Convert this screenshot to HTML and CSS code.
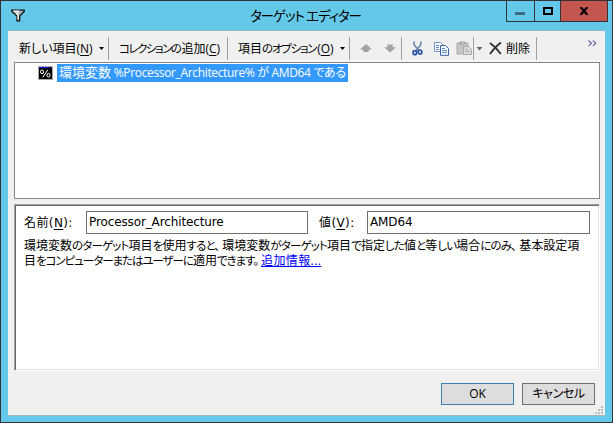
FILE: index.html
```html
<!DOCTYPE html>
<html lang="ja">
<head>
<meta charset="utf-8">
<title>ターゲット エディター</title>
<link rel="stylesheet" href="styles.css">
</head>
<body>
<div class="window">
  <header class="titlebar">
    <svg class="app-icon" width="14" height="13" viewBox="0 0 14 13"><path d="M.8 1.2h12.4v1.2L8.7 7v4.8H6V7L.8 2.4z" fill="#a9b9b9" stroke="#111" stroke-width="1.3"/><path d="M2.5 2.2h5L5.7 4.6 7 6.5v4" stroke="#fff" stroke-width="1.2" fill="none"/></svg>
    <h1 class="title"><span class="t-title">ターゲット エディター</span></h1>
    <div class="controls">
      <span class="control"><svg width="10" height="3"><path fill="#3b6e80" d="M0 0h10v3H0z"/></svg></span>
      <span class="control max"><svg width="10" height="8"><path fill="none" stroke="#000" stroke-width="2" d="M1 1h8v6H1z"/></svg></span>
      <span class="control close"><svg width="10" height="8" viewBox="0 0 10 8"><path d="M1.6 0l6.8 8M8.4 0L1.6 8" stroke="#000" stroke-width="2.2"/></svg></span>
    </div>
  </header>
  <main class="client">
    <nav class="toolbar">
      <span class="tool new"><span class="t-new">新しい項目(<u>N</u>)</span><i class="caret"></i></span>
      <span class="tool add"><span class="t-add"><span class="menu-kana">コレクションの</span>追加(<u>C</u>)</span></span>
      <span class="tool opt"><span class="t-opt">項目<span class="menu-kana">のオプション</span>(<u>O</u>)</span><i class="caret"></i></span>
      <span class="tool arrows">
        <svg width="12" height="9" viewBox="0 0 12 9"><path d="M6 0l6 5.6H8.7V8H3.3V5.6H0z" fill="#a3a3a3"/></svg>
        <svg width="12" height="9" viewBox="0 0 12 9"><path d="M6 8.6L0 3.2h3.3V.6h5.4v2.6H12z" fill="#a3a3a3"/></svg>
      </span>
      <span class="tool clip">
        <svg class="cut" width="11" height="15" viewBox="0 0 11 15"><path d="M2 .5v3l4.6 6M8.8.5v3L4.3 9.5" fill="none" stroke="#6886a8" stroke-width="1.6"/><g fill="none" stroke="#2950a5" stroke-width="1.7"><ellipse cx="2.8" cy="11.7" rx="1.8" ry="2"/><ellipse cx="8" cy="11" rx="1.8" ry="2"/></g></svg>
        <svg class="copy" width="16" height="14" viewBox="0 0 16 14"><g fill="#f7fbff" stroke="#7895c7"><path d="M.5.5h6l3 3v6h-9z"/><path d="M6.5 3.5h5l3 3v6.8h-8z" stroke="#3c60a9"/></g><path d="M2 3.5h3M2 5.5h3M2 7.5h3M8 6.5h3M8 8.5h5M8 10.5h5" stroke="#608bcb"/></svg>
        <svg class="paste" width="17" height="15" viewBox="0 0 17 15"><path d="M1 2h11v11H1z" fill="#c6c6c6" stroke="#aaa"/><path d="M4 1h5v2H4z" fill="#ddd" stroke="#999"/><path d="M7.5 5.5h5l3 3v5h-8z" fill="#ddd" stroke="#aaa"/><path d="M9 8.5h3M9 10.5h5" stroke="#aaa"/></svg>
      </span>
      <span class="tool del"><i class="caret gray"></i>
        <svg width="13" height="13" viewBox="0 0 13 13"><path d="M1 1q6 4 10.8 11M12 .5Q7 4 1 12" fill="none" stroke="#303038" stroke-width="1.9"/></svg>
        <span class="t-del">削除</span>
      </span>
      <span class="more"><svg width="9" height="7" viewBox="0 0 9 7"><path d="M.5.5l3 2.8-3 2.8M4.8.5l3 2.8-3 2.8" fill="none" stroke="#6d6da8" stroke-width="1.2"/></svg></span>
    </nav>
    <section class="tree">
      <svg class="node-icon" width="15" height="14" viewBox="0 0 15 14"><path d="M0 0h15v14H0z" fill="#aaa"/><path d="M1 1h13v12H1z" fill="#000"/><path d="M1 1.5h13" stroke="#1616e8" stroke-dasharray="9 1 1 1"/><g fill="none" stroke="#fff"><ellipse cx="4" cy="5.8" rx="1.5" ry="1.9"/><ellipse cx="10.5" cy="9.2" rx="1.5" ry="1.9"/><path d="M9.7 4l-5 7.5"/></g></svg>
      <span class="selected"><span class="kanji">環境変数</span> %Processor_Architecture% <span class="kana">が</span> AMD64 <span class="kana">である</span></span>
    </section>
    <section class="panel">
      <div class="fields">
        <label class="name-label">名前(<u>N</u>):</label>
        <div class="input name">Processor_Architecture</div>
        <label class="value-label">値(<u>V</u>):</label>
        <div class="input value">AMD64</div>
      </div>
      <p class="help"><span class="line one">環境変数<span class="kana">のターゲット</span>項目<span class="kana">を</span>使用<span class="kana comma">すると、</span>環境変数<span class="kana">がターゲット</span>項目<span class="kana">で</span>指定<span class="kana">した</span>値<span class="kana">と</span>等<span class="kana">しい</span>場合<span class="kana comma">にのみ、</span>基本設定項</span>
      <span class="line two">目<span class="kana">をコンピューターまたはユーザーに</span>適用<span class="kana comma">できます。</span><a class="info">追加情報...</a></span></p>
    </section>
    <footer class="footer">
      <span class="button primary">OK</span>
      <span class="button"><span class="t-cancel">キャンセル</span></span>
    </footer>
    <svg class="grip" width="8" height="8" viewBox="0 0 8 8"><path fill="#bcbcbc" d="M6 0h2v2H6zM3 3h2v2H3zM6 3h2v2H6zM0 6h2v2H0zM3 6h2v2H3zM6 6h2v2H6z"/></svg>
  </main>
</div>
</body>
</html>
```
FILE: styles.css
```css
* { box-sizing: border-box; }
body { margin: 0; font: 12px/16px "Open Sans", "Noto Sans CJK JP", sans-serif; color: #000; overflow: hidden; }
svg { display: block; flex: none; }
u { text-underline-offset: 2px; }
.window { width: 613px; height: 423px; border: 1px solid #333338; background: #64c9e9; padding: 0 7px 6px; font-feature-settings: "palt"; white-space: nowrap; }
.titlebar { height: 29px; display: flex; margin-right: -3px; }
.app-icon { margin: 8px 0 0 3px; }
.title { flex: 1; margin: 6px 0 0 225px; font-size: 13.5px; line-height: 18px; font-weight: 400; }
.t-title { letter-spacing: -1.1px; }
.controls { display: flex; width: 102px; height: 21px; border: 1px solid #333338; border-top: 0; }
.control { width: 28px; border-right: 1px solid #333338; padding: 11px 0 0 8px; }
.control.max { width: 26px; padding: 6px 0 0 8px; }
.control.close { flex: 1; border: 0; background: #c45650; padding: 6px 0 0 18px; }
.client { position: relative; height: 386px; background: #f0f0f0; border-top: 1px solid #91b5c2; border-bottom: 1px solid #a3b7be; padding: 0 5px 0 6px; display: flex; flex-direction: column; }
.toolbar { height: 30px; padding-top: 6px; display: flex; margin-bottom: 1px; border-bottom: 1px solid #fafafa; }
.tool { display: flex; flex: none; align-items: center; height: 23px; border-right: 1px solid #a0a0a0; }
.new { width: 95px; padding-left: 5px; }
.add { width: 119px; padding-left: 10px; }
.opt { width: 122px; padding-left: 10px; }
.t-new { width: 80px; letter-spacing: 0; }
.t-opt { width: 102px; }
.menu-kana { font-size: 11.5px; letter-spacing: -1.25px; margin-right: 1px; }
.t-add .menu-kana { letter-spacing: -1.5px; }
.caret { width: 5px; height: 3px; background: #000; clip-path: polygon(0 0, 100% 0, 50% 100%); }
.caret.gray { width: 7px; height: 4px; background: #666; margin-right: 6px; }
.arrows { width: 52px; padding-left: 10px; gap: 12px; }
.clip { width: 72px; padding-left: 10px; }
.cut { margin-right: 11px; }
.copy { margin-right: 6px; }
.del { width: 63px; padding-left: 2px; }
.t-del { margin-left: 4px; }
.more { margin: 3px 0 0 51px; }
.tree { height: 137px; background: #fff; border: 1px solid #828790; display: flex; padding: 1px 0 0 23px; }
.node-icon { margin: 2px 4px 0 0; }
.selected { width: 291px; height: 18px; background: #3399ff; color: #fff; padding: 0 2px; line-height: 17px; letter-spacing: -.35px; }
.kanji { font-size: 13px; letter-spacing: 0; }
.panel { height: 167px; margin-top: 5px; background: #fff; border: 1px solid; border-color: #a0a0a0 #fff #fff #a0a0a0; box-shadow: inset 1px 1px #696969, inset -1px -1px #e3e3e3; padding: 6px 8px 0 9px; }
.fields { display: flex; height: 23px; align-items: center; }
.name-label, .value-label { font-family: "DejaVu Sans", "Noto Sans CJK JP", sans-serif; letter-spacing: .4px; }
.name-label { width: 62px; }
.value-label { width: 59px; padding-left: 11px; }
.input { height: 23px; border: 1px solid #707070; padding-left: 2px; font: 12px/20px "DejaVu Sans", sans-serif; letter-spacing: -.12px; }
.name { width: 222px; }
.value { width: 223px; }
.help { margin: 4px 0 0; line-height: 15px; }
.line { display: block; }
.one .kana { font-size: 11.5px; letter-spacing: -.82px; }
.two .kana { font-size: 11.5px; letter-spacing: -1.05px; }
.comma { margin-right: 3px; }
.info { color: #00f; text-decoration: underline; letter-spacing: .4px; }
.footer { display: flex; justify-content: flex-end; gap: 8px; margin-top: 12px; padding-right: 5px; }
.button { width: 73px; height: 22px; border: 1px solid #707070; background: #ddd; text-align: center; line-height: 20px; }
.primary { border-color: #3c7fb1; }
.t-cancel { letter-spacing: -.4px; }
.grip { position: absolute; right: 2px; bottom: 1px; }
```
